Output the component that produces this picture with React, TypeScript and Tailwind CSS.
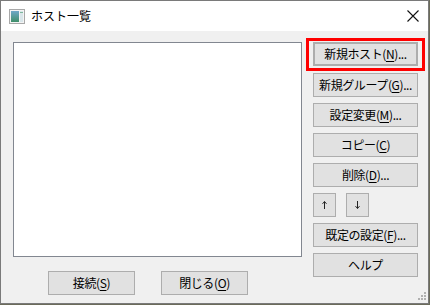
import React from 'react';

const FONT = { fontFamily: '"Yu Gothic UI", "Noto Sans CJK JP", "Noto Sans", sans-serif' };

function Btn({
  label,
  mn,
  tail = '',
  className = '',
  children,
}: {
  label?: string;
  mn?: string;
  tail?: string;
  className?: string;
  children?: React.ReactNode;
}) {
  return (
    <button
      className={[
        'flex h-[24px] items-center justify-center border border-[#adadad] bg-[#e1e1e1] text-[12px] leading-none tracking-[-0.4px] text-black',
        className,
      ].join(' ')}
    >
      {children ?? (
        <span>
          {label}
          {mn && (
            <>
              (<span className="underline underline-offset-2">{mn}</span>)
            </>
          )}
          {tail}
        </span>
      )}
    </button>
  );
}

function TitleIcon() {
  return (
    <svg width="16" height="15" viewBox="0 0 16 15">
      <rect x="0.5" y="0.5" width="15" height="14" fill="#f4f4f4" stroke="#a8a8a8" />
      <defs>
        <linearGradient id="g" x1="0" y1="0" x2="0" y2="1">
          <stop offset="0" stopColor="#6fa8c8" />
          <stop offset="1" stopColor="#3f8f6a" />
        </linearGradient>
      </defs>
      <rect x="2" y="2" width="8" height="11" fill="url(#g)" />
      <rect x="11" y="2" width="3" height="11" fill="#d9e6ea" />
      <rect x="11" y="3" width="3" height="1" fill="#7fb69c" />
    </svg>
  );
}

function Arrow({ down = false }: { down?: boolean }) {
  return (
    <svg width="5" height="8" viewBox="0 0 5 8" className={down ? 'rotate-180' : ''}>
      <path d="M2.5 0.5 V8 M0.5 2.8 L2.5 0.6 L4.5 2.8" stroke="#222" strokeWidth="1" fill="none" />
    </svg>
  );
}

export default function App() {
  return (
    <div className="h-[305px] w-[430px] bg-[#6b6b5a]" style={FONT}>
      <div className="flex h-[304px] w-[429px] flex-col border border-[#7a7a7a] bg-[#f0f0f0]">
        {/* title bar */}
        <div className="flex h-[30px] items-center bg-white pl-[8px] pr-[9px]">
          <TitleIcon />
          <span className="ml-[6px] text-[12px] text-black">ホスト一覧</span>
          <svg className="ml-auto" width="12" height="12" viewBox="0 0 12 12">
            <path d="M0.5 0.5 L11.5 11.5 M11.5 0.5 L0.5 11.5" stroke="#111" strokeWidth="1.1" />
          </svg>
        </div>

        <div className="relative flex flex-1 pl-[12px] pt-[11px]">
          {/* left column */}
          <div className="flex flex-col">
            <div className="h-[215px] w-[289px] border border-[#828790] bg-white" />
            <div className="mt-[14px] flex gap-[26px] pl-[35px]">
              <Btn label="接続" mn="S" className="w-[87px]" />
              <Btn label="閉じる" mn="O" className="w-[87px]" />
            </div>
          </div>

          {/* right column */}
          <div className="ml-[11px] flex w-[105px] flex-col">
            <div className="relative">
              <Btn label="新規ホスト" mn="N" tail="..." className="w-full border-2 border-[#0078d7]" />
              <div className="pointer-events-none absolute -bottom-[5px] -left-[7px] -right-[7px] -top-[4px] border-[3px] border-[#ff0000]" />
            </div>
            <Btn label="新規グループ" mn="G" tail="..." className="mt-[7px] w-full" />
            <Btn label="設定変更" mn="M" tail="..." className="mt-[6px] w-full" />
            <Btn label="コピー" mn="C" className="mt-[6px] w-full" />
            <Btn label="削除" mn="D" tail="..." className="mt-[6px] w-full" />
            <div className="mt-[6px] flex gap-[10px]">
              <Btn className="w-[23px]">
                <Arrow />
              </Btn>
              <Btn className="w-[23px]">
                <Arrow down />
              </Btn>
            </div>
            <Btn label="既定の設定" mn="F" tail="..." className="mt-[6px] w-full" />
            <Btn label="ヘルプ" className="mt-[6px] w-full" />
          </div>

          {/* resize grip */}
          <svg className="absolute bottom-[2px] right-[1px]" width="10" height="10" viewBox="0 0 10 10">
            <g fill="#b0b0b0">
              <rect x="7" y="1" width="2" height="2" />
              <rect x="4" y="4" width="2" height="2" />
              <rect x="7" y="4" width="2" height="2" />
              <rect x="1" y="7" width="2" height="2" />
              <rect x="4" y="7" width="2" height="2" />
              <rect x="7" y="7" width="2" height="2" />
            </g>
          </svg>
        </div>
      </div>
    </div>
  );
}
